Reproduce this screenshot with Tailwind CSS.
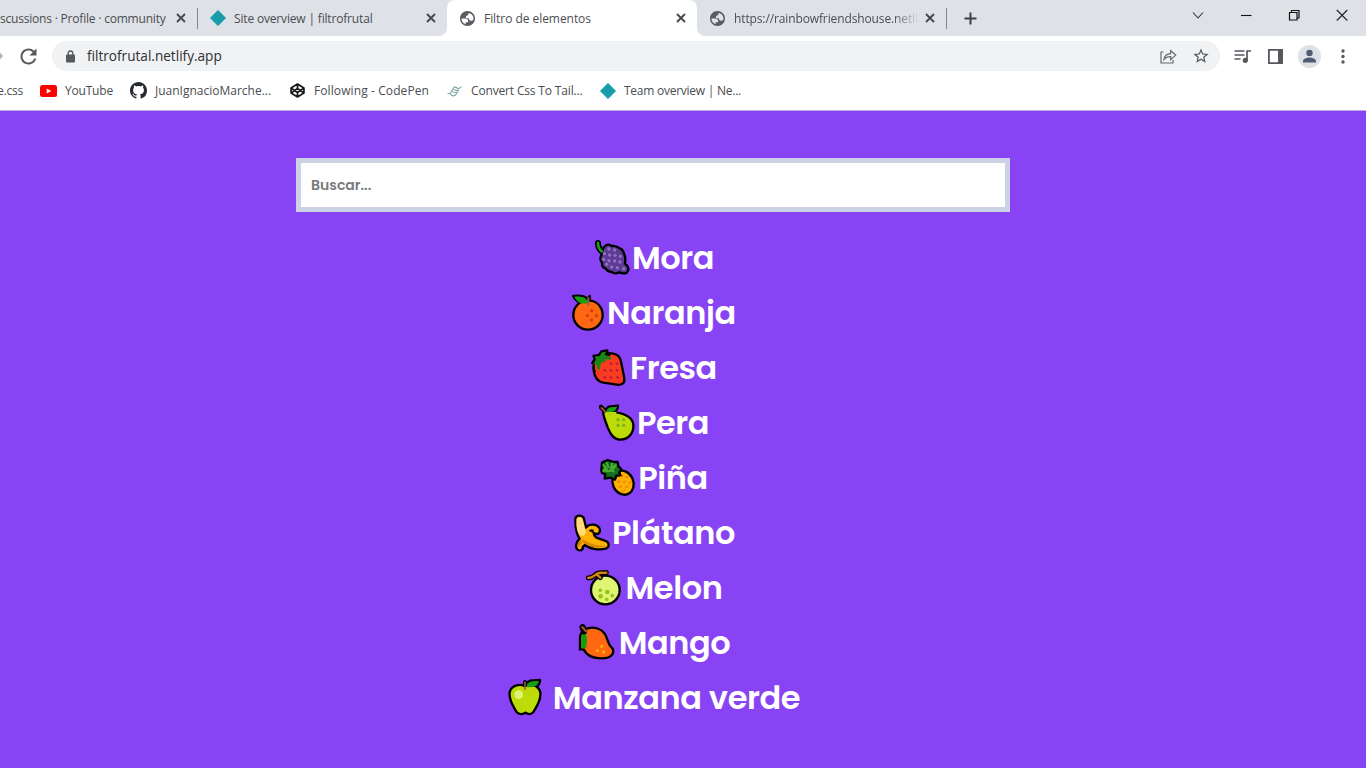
<!DOCTYPE html>
<html lang="es">
<head>
<meta charset="utf-8">
<title>Filtro de elementos</title>
<script src="https://cdn.jsdelivr.net/npm/@tailwindcss/browser@4"></script>
</head>
<body class="w-[1366px] h-[768px] overflow-hidden bg-[#8844f4] font-['Open_Sans',sans-serif] text-[12px] text-[#4a4d51] whitespace-nowrap">
<svg class="hidden">
  <symbol id="x" viewBox="0 0 10 10"><path d="M1 1l8 8M9 1L1 9" stroke="#45494d" stroke-width="1.9" fill="none"/></symbol>
  <symbol id="diamond" viewBox="0 0 16 16"><path d="M8 .3L15.7 8 8 15.7.3 8z" fill="#199caa" stroke="#199caa" stroke-width=".6" stroke-linejoin="round"/></symbol>
  <symbol id="globe" viewBox="2 2 20 20"><path fill="#5a5e63" d="M12 2C6.480 2 2 6.480 2 12s4.480 10 10 10 10-4.480 10-10S17.520 2 12 2zM4 12h4.400c3.407.020 4.922 1.730 4.545 5.127H9.488v2.470A8.004 8.004 0 0 1 4 12zm16 0c0 .340-.020.670-.060 1-.640 1.330-1.600 2-2.880 2-2.170 0-3.250-1.100-3.250-3.300H9.900c-.270-2.670.690-4 2.870-4 0-1.300.600-2.100 1.200-2.900A8 8 0 0 1 20 12z"/></symbol>
</svg>
<header class="h-[111px] bg-white flex flex-col border-b border-[#b9a9dc]">
  <!-- tab strip -->
  <div class="h-[36px] flex shrink-0 bg-[#dee1e6] border-b border-[#eaecef]">
    <div class="w-[447px] h-[36px] bg-white">
      <div class="h-[36px] bg-[#dee1e6] rounded-br-[8px] flex items-center">
        <span class="w-[176px] pt-[1px] tracking-[-0.2px]">scussions · Profile · community</span>
        <svg class="size-[10px]"><use href="#x"/></svg>
        <span class="ml-[11px] w-px h-[21px] bg-[#85888d]"></span>
        <svg class="ml-[12px] size-[16px]"><use href="#diamond"/></svg>
        <span class="ml-[8px] w-[192px] pt-[1px] tracking-[-0.17px]">Site overview | filtrofrutal</span>
        <svg class="size-[10px]"><use href="#x"/></svg>
      </div>
    </div>
    <div class="w-[250px] h-[36px] bg-[#dee1e6]">
      <div class="h-[36px] bg-white rounded-t-[8px] flex items-center">
        <svg class="ml-[13px] size-[15px]"><use href="#globe"/></svg>
        <span class="ml-[9px] w-[192px] pt-[1px] tracking-[-0.05px]">Filtro de elementos</span>
        <svg class="size-[10px]"><use href="#x"/></svg>
      </div>
    </div>
    <div class="flex-1 h-[36px] bg-white">
      <div class="h-[36px] bg-[#dee1e6] rounded-bl-[8px] flex items-center">
        <svg class="ml-[13px] size-[15px]"><use href="#globe"/></svg>
        <span class="ml-[9px] w-[185px] pt-[1px] tracking-[-0.12px] [mask-image:linear-gradient(to_right,black_86%,transparent_100%)]">https://rainbowfriendshouse.netli</span>
        <svg class="ml-[6px] size-[10px]"><use href="#x"/></svg>
        <span class="ml-[11px] w-px h-[21px] bg-[#85888d]"></span>
        <svg class="ml-[17px] size-[13px]" viewBox="0 0 13 13"><path d="M6.500.500v12M.500 6.500h12" stroke="#3c4043" stroke-width="2"/></svg>
        <div class="ml-auto mr-[18px] mb-[6px] flex items-center">
          <svg class="size-[12px] mr-[36px]" viewBox="0 0 12 12"><path d="M1 3.500l5 5.500 5-5.500" fill="none" stroke="#333" stroke-width="1.100"/></svg>
          <svg class="size-[12px] mr-[36px]" viewBox="0 0 12 12"><path d="M1 6.500h10.500" stroke="#111" stroke-width="1.100"/></svg>
          <svg class="size-[12px] mr-[36px]" viewBox="0 0 12 12"><path d="M1.500 3.500h7.500v7.500h-7.500zM3.500 3.500v-2h7.500v7.500h-2" fill="none" stroke="#111" stroke-width="1.200"/></svg>
          <svg class="size-[12px]" viewBox="0 0 12 12"><path d="M.800 1l10.500 10.500M11.300 1L.800 11.500" stroke="#222" stroke-width="1.100"/></svg>
        </div>
      </div>
    </div>
  </div>
  <!-- toolbar -->
  <div class="h-[40px] flex items-center shrink-0">
    <svg class="w-[4px] h-[10px]" viewBox="0 0 4 10"><path d="M0 1.500L3 5 0 8.500z" fill="#b5b7ba"/></svg>
    <svg class="ml-[16px] size-[17px]" viewBox="3.500 3.500 17 17"><path fill="#55595e" d="M17.650 6.350A7.958 7.958 0 0 0 12 4c-4.420 0-7.990 3.580-7.990 8s3.570 8 7.990 8c3.730 0 6.840-2.550 7.730-6h-2.080A5.990 5.990 0 0 1 12 18c-3.310 0-6-2.690-6-6s2.690-6 6-6c1.660 0 3.140.690 4.220 1.780L13 11h7V4l-2.350 2.350z"/></svg>
    <div class="ml-[15px] w-[1168px] h-[30px] rounded-full bg-[#f1f2f4] flex items-center">
      <svg class="ml-[14px] w-[9px] h-[13px]" viewBox="0 0 9 13"><path d="M2.200 5.500V3.300a2.300 2.300 0 0 1 4.600 0v2.200" fill="none" stroke="#55595e" stroke-width="1.300"/><rect y="4.600" width="9" height="8" rx="1" fill="#55595e"/></svg>
      <span class="ml-[12px] pt-[1px] text-[13.6px] text-[#2c2f33]">filtrofrutal.netlify.app</span>
      <svg class="ml-auto w-[17px] h-[16px]" viewBox="0 0 17 16" fill="none" stroke="#63676c" stroke-width="1.200"><path d="M3.500 4H1v11h12v-3M4 11.500C4.500 7.500 7 5.700 10.700 5.600V2.500l5 4.600-5 4.500V8.500C7.700 8.400 5.600 9.500 4 11.500z"/></svg>
      <svg class="ml-[16px] mr-[11px] size-[16px]" viewBox="1.500 1.500 21 21"><path fill="#55595e" d="M22 9.240l-7.190-.620L12 2 9.190 8.630 2 9.240l5.460 4.730L5.820 21 12 17.270 18.180 21l-1.630-7.030L22 9.240zM12 15.400l-3.760 2.270 1-4.280-3.320-2.880 4.380-.380L12 6.100l1.710 4.040 4.380.380-3.320 2.880 1 4.280L12 15.400z"/></svg>
    </div>
    <svg class="ml-[14px] w-[17px] h-[15px]" viewBox="0 0 17 15"><path d="M.500 2h10M.500 6h10M.500 10h6M13 11V2h4" stroke="#55595e" stroke-width="1.700" fill="none"/><circle cx="11.300" cy="11.300" r="2.600" fill="#55595e"/></svg>
    <svg class="ml-[17px] size-[15px]" viewBox="0 0 15 15"><path d="M.900.900h13.200v13.200H.900z" fill="none" stroke="#55595e" stroke-width="1.800"/><path d="M10 1h4v13h-4z" fill="#55595e"/></svg>
    <svg class="ml-[15px] size-[23px]" viewBox="0 0 23 23"><circle cx="11.500" cy="11.500" r="11.500" fill="#dee1e6"/><circle cx="11.500" cy="7.900" r="3.200" fill="#4f5d73"/><path d="M5 17.500v-1.600c0-2.200 4-3.500 6.500-3.500s6.500 1.300 6.500 3.500v1.600z" fill="#4f5d73"/></svg>
    <svg class="ml-[20px] w-[4px] h-[15px]" viewBox="0 0 4 15" fill="#55595e"><circle cx="2" cy="2" r="1.700"/><circle cx="2" cy="7.500" r="1.700"/><circle cx="2" cy="13" r="1.700"/></svg>
  </div>
  <!-- bookmarks -->
  <div class="h-[29px] flex items-center shrink-0">
    <div class="w-[23px] flex justify-end overflow-hidden"><span class="tracking-[-0.2px]">e.css</span></div>
    <svg class="ml-[17px] w-[17px] h-[12px]" viewBox="0 0 17 12"><rect width="17" height="12" rx="2.500" fill="#f00"/><path d="M6.700 3.500v5l4.600-2.500z" fill="#fff"/></svg>
    <span class="ml-[8px] w-[65px] tracking-[-0.2px]">YouTube</span>
    <svg class="size-[17px]" viewBox="0 0 16 16"><path fill="#24292f" d="M8 0C3.580 0 0 3.580 0 8c0 3.540 2.290 6.530 5.470 7.590.400.070.550-.170.550-.380 0-.190-.010-.820-.010-1.490-2.010.370-2.530-.490-2.690-.940-.090-.230-.480-.940-.820-1.130-.280-.150-.680-.520-.010-.530.630-.010 1.080.580 1.230.820.720 1.210 1.870.870 2.330.660.070-.520.280-.870.510-1.070-1.780-.200-3.640-.890-3.640-3.950 0-.870.310-1.590.820-2.150-.080-.200-.360-1.020.080-2.120 0 0 .670-.210 2.200.820.640-.180 1.320-.270 2-.270s1.360.090 2 .270c1.530-1.040 2.200-.820 2.200-.820.440 1.100.160 1.920.080 2.120.510.560.820 1.270.820 2.150 0 3.070-1.870 3.750-3.650 3.950.290.250.540.730.540 1.480 0 1.070-.010 1.930-.010 2.200 0 .210.150.460.550.380A8.013 8.013 0 0 0 16 8c0-4.420-3.580-8-8-8z"/></svg>
    <span class="ml-[8px] w-[135px]">JuanIgnacioMarche...</span>
    <svg class="size-[15px]" viewBox="0 0 14 14" fill="none" stroke="#17191b" stroke-width="1.600" stroke-linejoin="round"><path d="M7 1l6 3.700v4.600L7 13 1 9.300V4.700zM1 4.700l6 4.100 6-4.100M1 9.300l6-4.100 6 4.100M7 1v4.200M7 8.800V13"/></svg>
    <span class="ml-[9px] w-[133px] tracking-[0.1px]">Following - CodePen</span>
    <svg class="w-[15px] h-[12px]" viewBox="0 0 15 12" fill="none" stroke="#7fa9a4" stroke-width="1.100"><path d="M.500 8.500h2.500L6.500 3c1-1.500 2.500-.800 3.500 0s2.500.800 4.500-1.500M3 8.500c1.500 2.500 3.500 3 5.500 1.500L12 4.500M4.500 6.500c1.500-.500 3 1.800 5 .800M6 4.500c1.500-.500 3 1.500 5 .800"/></svg>
    <span class="ml-[9px] w-[129px] tracking-[-0.16px]">Convert Css To Tail...</span>
    <svg class="size-[16px]"><use href="#diamond"/></svg>
    <span class="ml-[8px] tracking-[-0.25px]">Team overview | Ne...</span>
  </div>
</header>

<main class="ml-[296px] w-[714px] pt-[47px] font-['Poppins','Inter',sans-serif]">
  <div class="h-[54px] border-[5px] border-[#ccd2e6] bg-white px-[10px] flex items-center text-[14px] font-semibold text-[#7b7b7b]">Buscar...</div>
  <ul class="mt-[18.5px] pl-[2px] text-[32px] tracking-[-0.4px] font-semibold text-white [&>li]:h-[55px] [&>li]:flex [&>li]:items-center [&>li]:justify-center [&_svg]:h-[40px] [&_svg]:shrink-0">
    <li><svg class="w-[38px]" viewBox="99 24 114 120"><path d="M111 39c0 12 3 19 13 27" stroke="#000" stroke-width="18" stroke-linecap="round" fill="none"/><path d="M128 53c7-10 17-12 24-5 12-3 20 4 26 8 10 4 10 13 13 20 4 10 1 18 1 25 13 8 13 20 5 27-8 5-16 1-22-1-8 5-18 3-23-1-8 0-14-4-18-10-10-4-12-10-11-18-7-7-6-18 0-25 0-9 0-15 5-20z" fill="#5d3a94" stroke="#000" stroke-width="7"/><path d="M111 39c0 12 3 19 11 25" stroke="#16a012" stroke-width="8" stroke-linecap="round" fill="none"/><g fill="#9070c4"><circle cx="144" cy="57" r="5"/><circle cx="161" cy="60" r="5"/><circle cx="130" cy="71" r="5"/><circle cx="146" cy="75" r="5"/><circle cx="162" cy="76" r="5"/><circle cx="178" cy="79" r="5"/><circle cx="128" cy="88" r="5"/><circle cx="144" cy="92" r="5"/><circle cx="161" cy="93" r="5"/><circle cx="177" cy="96" r="5"/><circle cx="137" cy="103" r="5"/><circle cx="152" cy="111" r="5"/><circle cx="169" cy="113" r="5"/><circle cx="188" cy="116" r="5"/></g></svg><span>Mora</span></li>
    <li><svg class="w-[35px]" viewBox="36 189 105 120"><circle cx="84" cy="255" r="44" fill="#ff6713" stroke="#000" stroke-width="7"/><path d="M39 198c18-2 36-3 43 9l7-9v22c-21 3-40-2-50-22z" fill="#12a012" stroke="#000" stroke-width="7" stroke-linejoin="round"/><path d="M53 229c8-11 20-14 31-14s24 3 32 14l-8 8H60z" fill="#ff6713"/><path d="M43 200c20-1 36 2 41 20-20 3-34-4-41-20z" fill="#16a012"/><path d="M85 202v25" stroke="#94623b" stroke-width="6"/><g fill="#d93c0c"><circle cx="95" cy="242" r="5"/><circle cx="82" cy="257" r="5"/><circle cx="109" cy="257" r="5"/><circle cx="95" cy="270" r="5"/></g></svg><span>Naranja</span></li>
    <li><svg class="w-[39px]" viewBox="96 24 117 120"><path d="M106 64c10-22 43-30 66-20 13 6 13 17 17 35l7 36c2 15-8 21-23 19l-40-6c-27-5-33-36-27-64z" fill="#f93b20" stroke="#000" stroke-width="7"/><path d="M99 72l9-15-4-9 17-3 6-10 18-3-5 9 14 5" fill="#168615" stroke="#000" stroke-width="8" stroke-linejoin="round"/><path d="M101 74l10-14-4-10 15-2 7-11 12-2-5 12 20 5v7l-18-1 2 7-14 3-4 23-7-5-4-16-8 3-2 10z" fill="#168615"/><path d="M104 78v10l5 8" stroke="#000" stroke-width="6" fill="none"/><g stroke="#b81843" stroke-width="6" stroke-linecap="round"><path d="M155 70l3 2M173 70l3 2M136 90l3 2M154 90l3 2M172 90l3 2M136 111l3 2M154 111l3 2M174 111l3 2"/></g></svg><span>Fresa</span></li>
    <li><svg class="w-[38px]" viewBox="117 189 114 120"><path d="M130 212c8-7 25-6 40 5 25 5 48 13 50 37 2 24-13 44-38 45-23 0-32-20-39-37-7-21-15-34-13-50z" fill="#bcdb08" stroke="#000" stroke-width="7"/><path d="M133 212l13-12 28-3c0 14-10 24-28 22z" fill="#16a012" stroke="#000" stroke-width="7" stroke-linejoin="round"/><path d="M123 201l12 13" stroke="#000" stroke-width="14" stroke-linecap="round"/><path d="M134 216h36l-4 8h-32z" fill="#bcdb08"/><path d="M137 215l11-12 22-3c0 11-10 18-33 15z" fill="#16a012"/><path d="M123 202l15 16" stroke="#a1572e" stroke-width="6"/><g fill="#78b51b"><circle cx="174" cy="239" r="5"/><circle cx="191" cy="239" r="5"/><circle cx="174" cy="256" r="5"/><circle cx="191" cy="256" r="5"/></g></svg><span>Pera</span></li>
    <li><svg class="w-[38px]" viewBox="120 24 114 120"><ellipse cx="189" cy="98" rx="31" ry="37" transform="rotate(-25 189 98)" fill="#ffb000" stroke="#000" stroke-width="7"/><path d="M124 62l2-24 17-8 14 5 16 1 2 12 9 10-6 10 4 9-13 0-4 12-14-6-17 3 2-13-10-4z" fill="#12701c" stroke="#000" stroke-width="7" stroke-linejoin="round"/><path d="M128 43l11 12-11 8 16-2M139 36l7 18M157 38l-4 17 16-11-13 18-18 2M154 59l9 7" fill="none" stroke="#4cae34" stroke-width="6"/><g fill="none" stroke="#df7d0a" stroke-width="3"><path d="M179 78l7 3 3-7M195 80l7 3 3-7M170 94l7 3 3-7M187 95l7 3 3-7M204 97l7 3 3-7M176 109l7 3 3-7M194 110l7 3 3-7M184 122l7 3 3-7"/></g></svg><span>Piña</span></li>
    <li><svg class="w-[39px]" viewBox="36 189 117 120"><path d="M43 206c3-12 21-12 26 0l6 27c9-13 33-11 40 1 5 9 0 18-8 18-5 0-9-3-9-3 0 6 3 10 8 14l28 10c11 4 12 18 2 22-20 6-48 3-64-10l-7 6c2 9-8 13-15 8-8-6-6-22 6-33-11-14-13-40-13-60z" fill="#ffb000" stroke="#000" stroke-width="7" stroke-linejoin="round"/><path d="M47 208c2-9 14-10 18 1l9 35c0 8-3 13-13 14-15-8-16-33-14-50z" fill="#ffdb7c"/><path d="M83 243c4-6 9-7 16-3l-2 9z" fill="#111"/><path d="M66 268c18 13 40 21 72 19-26 9-50 7-72-9zM51 282c3-8 8-12 14-12-3 10-6 17-13 22z" fill="#d48703"/></svg><span>Plátano</span></li>
    <li><svg class="w-[40px]" viewBox="81 24 120 120"><circle cx="139" cy="90" r="43" fill="#dff571" stroke="#000" stroke-width="7"/><path d="M88 54c15 0 16-8 28-14 9-4 18 0 26-2M113 43l11 10" stroke="#000" stroke-width="15" stroke-linecap="round" fill="none"/><path d="M88 54c15 0 16-8 28-14 9-4 18 0 26-2M113 43l11 10" stroke="#d4860d" stroke-width="7" stroke-linecap="round" fill="none"/><g fill="#91c41c"><circle cx="124" cy="91" r="5.500"/><circle cx="145" cy="96" r="7"/><circle cx="125" cy="109" r="7"/><circle cx="160" cy="107" r="5.500"/><circle cx="143" cy="118" r="5.500"/></g></svg><span>Melon</span></li>
    <li><svg class="w-[41px]" viewBox="54 189 123 120"><path d="M70 211c20-14 52-10 66 13 11 21 6 28 22 42 7 19-10 29-32 29-30-1-45-8-55-27H60v-32c0-9 4-19 10-25z" fill="#ff6713" stroke="#000" stroke-width="7"/><path d="M64 265v-30c0-9 3-18 9-22 9 12 10 36 4 52z" fill="#12a012"/><path d="M68 202l4 12" stroke="#000" stroke-width="19" stroke-linecap="round"/><path d="M67 202l11 12" stroke="#a1572e" stroke-width="7" stroke-linecap="round"/><g fill="#ffad00"><circle cx="125" cy="259" r="5"/><circle cx="112" cy="272" r="5"/><circle cx="131" cy="276" r="5"/></g></svg><span>Mango</span></li>
    <li><svg class="w-[44px]" viewBox="24 24 132 120"><path d="M74 48c16-8 43-3 47 20 3 24-12 42-20 57-7 10-18 8-25 3-8 5-21 7-27-3-9-16-24-37-20-58 4-21 30-26 45-19z" fill="#bcdb08" stroke="#000" stroke-width="7"/><path d="M74 33l7 5 9-6 30-2c0 17-11 27-40 23z" fill="#12a012" stroke="#000" stroke-width="7" stroke-linejoin="round"/><path d="M69 34h12v22H69z" fill="#000"/><path d="M50 51h57v8H50z" fill="#bcdb08"/><path d="M79 51c3-15 17-18 37-17-3 14-15 20-37 17z" fill="#16a012"/><path d="M75 35v24" stroke="#a1572e" stroke-width="5"/><circle cx="56" cy="74" r="13" fill="#e0f475"/></svg><span class="pl-[1px]">Manzana verde</span></li>
  </ul>
</main>
</body>
</html>
